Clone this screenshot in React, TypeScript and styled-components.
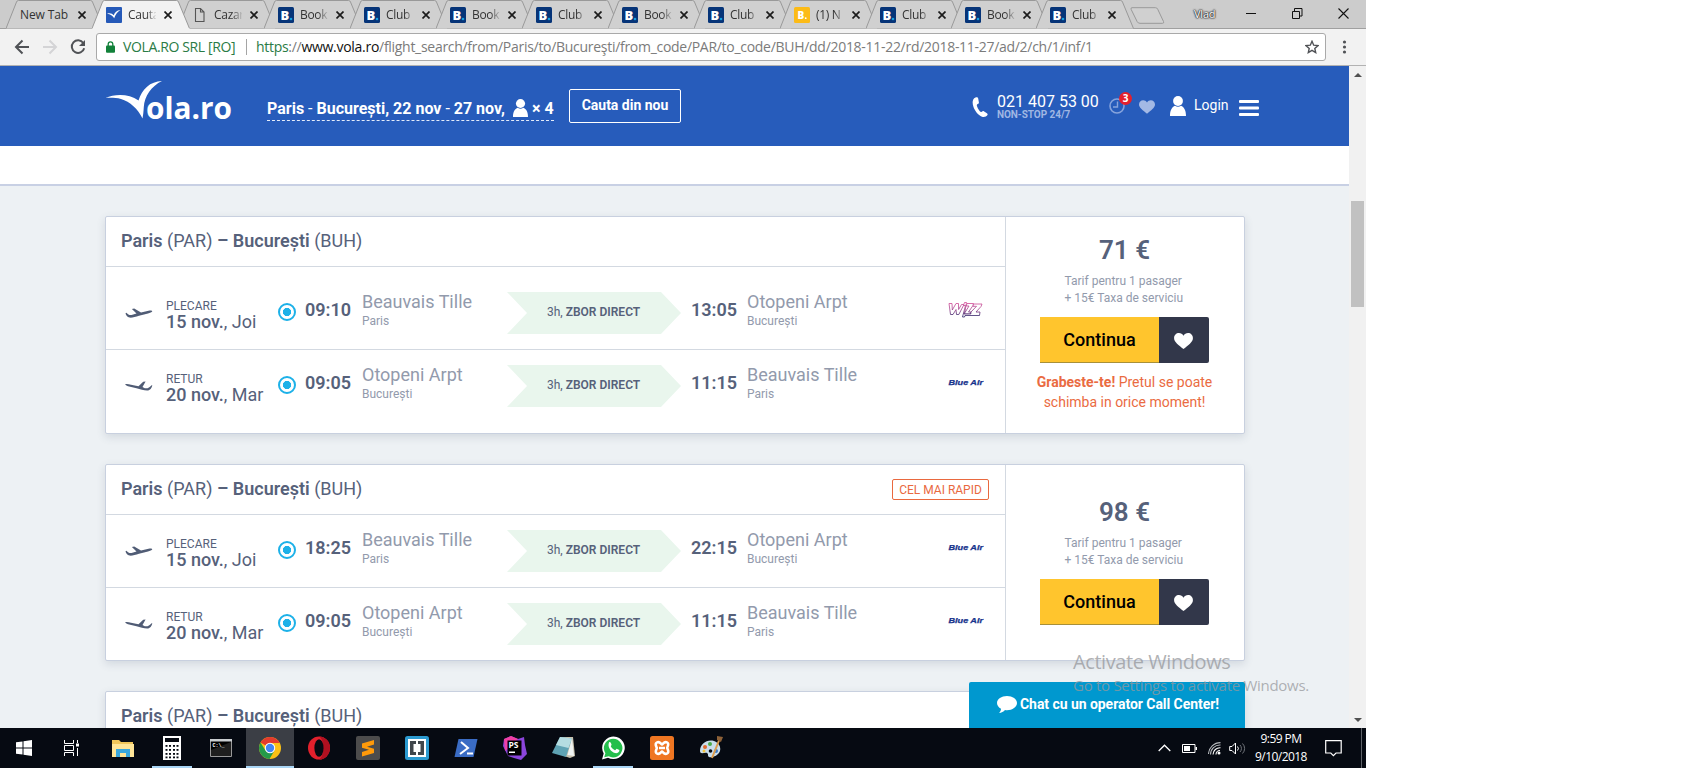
import React from "react";
import styled, { createGlobalStyle, css } from "styled-components";

const GlobalStyle = createGlobalStyle`
  * { box-sizing: border-box; }
  html, body { margin: 0; padding: 0; background: #fff; }
  body { font-family: Roboto, "Liberation Sans", sans-serif; }
  svg { display: block; flex: none; }
`;

const systemFont = css`
  font-family: "Open Sans", "Noto Sans", sans-serif;
`;

const Screen = styled.div`
  position: relative;
  width: 1366px;
  height: 768px;
  overflow: hidden;
  display: flex;
  flex-direction: column;
  background: #eef1f5;
`;

/* ---------- browser chrome ---------- */

const TabStrip = styled.div`
  ${systemFont}
  height: 29px;
  flex: none;
  display: flex;
  align-items: flex-start;
  padding-left: 6px;
  background: #cccccc;
  border-bottom: 1px solid #a0a0a0;
`;

const TabBox = styled.div<{ $active?: boolean; $narrow?: boolean }>`
  position: relative;
  z-index: ${(p) => (p.$active ? 2 : 1)};
  width: ${(p) => (p.$narrow ? 97 : 98)}px;
  height: 29px;
  flex: none;
  display: flex;
  align-items: center;
  padding: 0 0 0 14px;
  & + & { margin-left: -12px; }
`;

const TabShape = styled.svg`
  position: absolute;
  inset: 0;
  z-index: -1;
`;

const TabLabel = styled.span<{ $wide?: boolean }>`
  width: ${(p) => (p.$wide ? 50 : 28)}px;
  margin-left: ${(p) => (p.$wide ? 0 : 6)}px;
  overflow: hidden;
  white-space: nowrap;
  font-size: 12px;
  letter-spacing: ${(p) => (p.$wide ? -0.1 : -0.3)}px;
  line-height: 20px;
  color: #333;
  mask-image: ${(p) => (p.$wide ? "none" : "linear-gradient(90deg, #000 65%, transparent 105%)")};
`;

const CloseIcon = styled.svg`
  margin-left: 8px;
`;

const NewTab = styled.svg`
  margin: 7px 0 0 -5px;
`;

const ProfileName = styled.span`
  margin: 6px 0 0 29px;
  width: 24px;
  font-size: 11px;
  line-height: 16px;
  letter-spacing: -0.2px;
  color: #fff;
  text-shadow: 0 0 2px #333, 0 0 1px #333, 0 0 1px #333, 0 0 2px #333;
`;

const WindowControls = styled.div`
  display: flex;
  margin-left: auto;
  padding: 8px 17px 0 0;
  gap: 35px;
`;

const Toolbar = styled.div`
  ${systemFont}
  height: 37px;
  flex: none;
  display: flex;
  align-items: center;
  padding: 0 0 1px 14px;
  background: #f2f2f2;
  border-bottom: 1px solid #b2b2b2;
`;

const NavIcons = styled.div`
  display: flex;
  gap: 12px;
  width: 82px;
`;

const AddressBar = styled.div`
  width: 1230px;
  height: 28px;
  display: flex;
  align-items: center;
  padding: 0 6px 0 9px;
  border: 1px solid #a9a9a9;
  border-radius: 3px;
  background: #fff;
  font-size: 14px;
  color: #7b7b7b;
  white-space: nowrap;
`;

const SiteOwner = styled.span`
  flex: none;
  margin-left: 8px;
  width: 123px;
  color: #2a7b45;
  letter-spacing: -0.38px;
`;

const OwnerDivider = styled.i`
  flex: none;
  width: 1px;
  height: 16px;
  margin-right: 9px;
  background: #a5a5a5;
`;

const Url = styled.span`
  letter-spacing: -0.29px;
  b { font-weight: 400; color: #111; }
  em { font-style: normal; color: #2a7b45; }
`;

/* ---------- page ---------- */

const Viewport = styled.div`
  flex: 1;
  min-height: 0;
  display: flex;
`;

const Page = styled.main`
  position: relative;
  width: 1349px;
  height: 662px;
  overflow: hidden;
  background: #edf1f4;
`;

const Scrollbar = styled.div`
  width: 17px;
  display: flex;
  flex-direction: column;
  align-items: center;
  padding: 7px 0 6px;
  background: #f1f1f1;
`;

const Thumb = styled.div`
  width: 13px;
  height: 106px;
  margin-top: 124px;
  margin-bottom: auto;
  background: #c1c1c1;
`;

const Header = styled.header`
  height: 80px;
  display: flex;
  align-items: flex-start;
  padding-left: 105px;
  background: #275cbb;
  color: #fff;
`;

const SubHeader = styled.div`
  height: 40px;
  background: #fff;
  border-bottom: 2px solid #c8d0e4;
`;

const Logo = styled.svg`
  margin-top: 12px;
  overflow: visible;
`;

const Trip = styled.div`
  margin: 29px 0 0 27px;
  width: 287px;
  height: 26px;
  display: flex;
  align-items: center;
  padding-top: 1px;
  border-bottom: 1px dashed #e4ecfa;
  font-size: 16px;
  font-weight: 700;
  line-height: 24px;
  white-space: nowrap;
  i { font-style: normal; font-weight: 400; }
`;

const TripText = styled.span`
  width: 246px;
  padding-top: 2px;
`;

const Passengers = styled.span`
  margin-left: 4px;
  padding-top: 1px;
`;

const SearchAgain = styled.button`
  margin: 23px 0 0 15px;
  width: 112px;
  height: 34px;
  padding: 0 0 2px;
  border: 1px solid #fff;
  border-radius: 2px;
  background: transparent;
  color: #fff;
  font: 700 14px/20px Roboto, sans-serif;
`;

const HeaderTools = styled.div`
  display: flex;
  align-items: flex-start;
  margin: 26px 0 0 291px;
`;

const Phone = styled.div`
  width: 112px;
  margin-left: 9px;
  font-size: 16px;
  line-height: 19px;
  white-space: nowrap;
  small {
    display: block;
    margin-top: -2px;
    font-size: 10px;
    line-height: 12px;
    font-weight: 700;
    letter-spacing: -0.05px;
    color: #a0b7e3;
  }
`;

const History = styled.div`
  position: relative;
  width: 30px;
  padding-top: 6px;
`;

const Count = styled.span`
  position: absolute;
  left: 10px;
  top: 0;
  width: 13px;
  height: 13px;
  border-radius: 50%;
  background: #e3202e;
  font: 700 10px/13px "Open Sans", sans-serif;
  text-align: center;
`;

const Login = styled.span`
  width: 45px;
  margin-left: 8px;
  font-size: 14px;
  line-height: 27px;
`;

const Results = styled.section`
  width: 1140px;
  margin: 30px 0 0 105px;
  display: flex;
  flex-direction: column;
  gap: 30px;
`;

const Card = styled.article`
  display: flex;
  border: 1px solid #c8d0df;
  border-radius: 2px;
  background: #fff;
  color: #56617a;
  box-shadow: 0 3px 9px rgba(70, 84, 110, 0.16);
`;

const Flights = styled.div`
  width: 900px;
  border-right: 1px solid #d3d9e1;
`;

const CardHeader = styled.div`
  height: 50px;
  display: flex;
  align-items: center;
  justify-content: space-between;
  padding: 0 16px 1px 15px;
  border-bottom: 1px solid #d3d9e1;
  font-size: 18px;
`;

const Route = styled.span`
  padding-bottom: 2px;
  b { font-weight: 600; }
`;

const Badge = styled.span`
  width: 97px;
  height: 21px;
  border: 1px solid #e9693f;
  border-radius: 2px;
  color: #e9693f;
  font-size: 12px;
  line-height: 20px;
  text-align: center;
`;

const Legs = styled.div<{ $padded?: boolean }>`
  padding: ${(p) => (p.$padded ? "10px 0 11px" : "0")};
`;

const Leg = styled.div`
  height: 72px;
  display: flex;
  align-items: flex-start;
  padding-left: 19px;
  white-space: nowrap;
`;

const LegRule = styled.div`
  height: 1px;
  background: #d3d9e1;
`;

const LegIcon = styled.svg`
  margin-top: 30px;
`;

const Day = styled.div`
  width: 112px;
  margin-left: 13px;
  padding-top: 22px;
  font-size: 18px;
  line-height: 18px;
  b { font-weight: 500; }
  small { display: block; font-size: 12px; line-height: 14px; }
`;

const Radio = styled.span`
  width: 18px;
  height: 18px;
  margin-top: 26px;
  border: 2px solid #1db1e8;
  border-radius: 50%;
  background: radial-gradient(circle, #1db1e8 3.8px, #fff 4.4px);
`;

const Time = styled.span<{ $end?: boolean }>`
  width: ${(p) => (p.$end ? 56 : 57)}px;
  margin: 22px 0 0 ${(p) => (p.$end ? 10 : 9)}px;
  font-size: 18px;
  line-height: 22px;
  font-weight: 600;
`;

const Station = styled.div<{ $end?: boolean }>`
  width: ${(p) => (p.$end ? 201 : 145)}px;
  padding-top: 14px;
  font-size: 18px;
  line-height: 22px;
  color: #929aac;
  small { display: block; font-size: 12px; line-height: 16px; }
`;

const Duration = styled.div`
  width: 174px;
  height: 42px;
  margin-top: 15px;
  padding: 0 0 2px 40px;
  display: flex;
  align-items: center;
  gap: 3px;
  background: #e9f6ed;
  clip-path: polygon(0 0, 154px 0, 100% 50%, 154px 100%, 0 100%, 20px 50%);
  font-size: 12px;
  b { font-weight: 600; }
`;

const Airline = styled.svg`
  margin-top: 23px;
`;

const Offer = styled.div`
  flex: 1;
  display: flex;
  flex-direction: column;
  align-items: center;
  justify-content: center;
  padding: 0 2px 3px 0;
`;

const Price = styled.div`
  margin-left: 1px;
  font-size: 26px;
  line-height: 28px;
  font-weight: 600;
`;

const Terms = styled.div`
  width: 119px;
  margin-top: 9px;
  font-size: 12px;
  line-height: 17px;
  white-space: nowrap;
  color: #929aac;
`;

const Buy = styled.div`
  display: flex;
  margin-top: 10px;
  height: 46px;
`;

const Continue = styled.button`
  width: 119px;
  padding: 1px 0 0 1px;
  border: 0;
  border-bottom: 1px solid #a89039;
  background: #ffc52d;
  color: #000;
  font: 500 18px/22px Roboto, sans-serif;
`;

const Favourite = styled.button`
  width: 50px;
  padding: 3px 0 0;
  display: grid;
  place-items: center;
  border: 0;
  border-radius: 0 2px 2px 0;
  background: #32374a;
`;

const Warning = styled.p`
  width: 190px;
  margin: 9px 0 0 1px;
  text-align: center;
  font-size: 14px;
  line-height: 20px;
  color: #ea6b42;
`;

const Chat = styled.div`
  position: absolute;
  left: 969px;
  bottom: 0;
  width: 276px;
  height: 46px;
  display: flex;
  align-items: flex-start;
  padding: 13px 0 0 28px;
  border-radius: 2px 2px 0 0;
  background: #0098cf;
  color: #fff;
  font-size: 14px;
  font-weight: 700;
  line-height: 18px;
  white-space: nowrap;
  span { margin-left: 3px; letter-spacing: -0.05px; }
`;

const Watermark = styled.div`
  ${systemFont}
  position: absolute;
  left: 1073px;
  top: 649px;
  color: rgba(150, 152, 156, 0.75);
  white-space: nowrap;
  font-size: 15px;
  line-height: 20px;
  letter-spacing: -0.28px;
  strong { display: block; font-weight: 400; font-size: 20px; line-height: 26px; letter-spacing: -0.42px; }
`;

/* ---------- taskbar ---------- */

const Taskbar = styled.footer`
  ${systemFont}
  height: 40px;
  flex: none;
  display: flex;
  background: #060a12;
  color: #fff;
`;

const TaskButton = styled.div<{ $open?: boolean; $active?: boolean }>`
  position: relative;
  width: 48px;
  height: 40px;
  display: grid;
  place-items: center;
  background: ${(p) => (p.$active ? "#3b3e45" : "transparent")};
  &::after {
    content: "";
    display: ${(p) => (p.$open || p.$active ? "block" : "none")};
    position: absolute;
    bottom: 0;
    left: ${(p) => (p.$active ? 0 : 4)}px;
    right: ${(p) => (p.$active ? 0 : 4)}px;
    height: 2px;
    background: #a9d5f5;
  }
`;

const Apps = styled.div`
  display: flex;
  gap: 1px;
  margin-left: 3px;
`;

const Tray = styled.div`
  display: flex;
  align-items: center;
  margin-left: auto;
`;

const Clock = styled.div`
  width: 60px;
  margin: 0 14px 0 5px;
  text-align: center;
  font-size: 12px;
  line-height: 18px;
  letter-spacing: -0.55px;
  white-space: nowrap;
`;

const ShowDesktop = styled.i`
  width: 5px;
  height: 40px;
  margin-left: 19px;
  border-left: 1px solid #5e6268;
`;

/* ---------- icons ---------- */

const Booking = ({ yellow }: { yellow?: boolean }) => (
  <svg width="16" height="16" viewBox="0 0 16 16">
    <rect width="16" height="16" rx="1.5" fill={yellow ? "#fcbb17" : "#063478"} />
    <text x={yellow ? 3.5 : 2.5} y={yellow ? 12 : 13} fill="#fff" fontFamily="Open Sans" fontWeight="800" fontSize={yellow ? 10 : 13}>B</text>
    <circle cx={yellow ? 11.7 : 13} cy={yellow ? 11.2 : 12} r={yellow ? 0.9 : 1.3} fill={yellow ? "#fff" : "#159fe0"} />
  </svg>
);

const VolaIcon = () => (
  <svg width="16" height="16" viewBox="0 0 16 16">
    <rect width="16" height="16" rx="1" fill="#2559b8" />
    <path d="M1 6.800C4 5.800 6 6.500 7.800 8.300c.8-2.700 3-4.800 6.700-5.200C11.500 4.800 9.600 7.200 8.200 11.200 6.500 9 4.500 7.200 1 6.800Z" fill="#fff" />
  </svg>
);

const FileIcon = () => (
  <svg width="16" height="16" viewBox="0 0 16 16" fill="none" stroke="#555" strokeWidth="1.1">
    <path d="M3.500 1.500h5l3.500 3.500v9.500h-8.500z M8.500 1.500v3.500h3.500" />
  </svg>
);

const favicons: Record<string, React.ReactNode> = {
  vola: <VolaIcon />,
  file: <FileIcon />,
  booking: <Booking />,
  yellow: <Booking yellow />,
};

const tabs = [
  { label: "New Tab" },
  { label: "Cauta", icon: "vola", active: true },
  { label: "Cazar", icon: "file" },
  { label: "Book", icon: "booking" },
  { label: "Club", icon: "booking" },
  { label: "Book", icon: "booking" },
  { label: "Club", icon: "booking" },
  { label: "Book", icon: "booking" },
  { label: "Club", icon: "booking" },
  { label: "(1) N", icon: "yellow" },
  { label: "Club", icon: "booking", narrow: true },
  { label: "Book", icon: "booking", narrow: true },
  { label: "Club", icon: "booking" },
];

const Tab = ({ label, icon, active, narrow }: { label: string; icon?: string; active?: boolean; narrow?: boolean }) => (
  <TabBox $active={active} $narrow={narrow}>
    <TabShape width="98" height="29" viewBox="0 0 98 29">
      <path d="M0 28.500 L10.500 2Q11 .5 12.500 .5H84.500Q86 .5 86.500 2L97.500 28.500" fill={active ? "#f2f2f2" : "#d0d0d0"} stroke="#999" />
      {active && <path d="M.5 28.500H97.500" stroke="#f2f2f2" />}
    </TabShape>
    {icon && favicons[icon]}
    <TabLabel $wide={!icon}>{label}</TabLabel>
    <CloseIcon width="8" height="8" viewBox="0 0 8 8" stroke="#1c1c1c" strokeWidth="1.7">
      <path d="M.5 .5L7.500 7.500M7.500 .5L.5 7.500" />
    </CloseIcon>
  </TabBox>
);

const Person = ({ size, h }: { size: number; h: number }) => (
  <svg width={size} height={h} viewBox="0 0 16 20" preserveAspectRatio="none" fill="#fff">
    <circle cx="8" cy="5" r="4.900" />
    <path d="M0 20C0 14 2 11 5 9.700Q8 12 11 9.700C14 11 16 14 16 20Z" />
  </svg>
);

const Heart = ({ w, h, color }: { w: number; h: number; color: string }) => (
  <svg width={w} height={h} viewBox="0 0 20 17" fill={color}>
    <path d="M10 17C5 13 0 9.500 0 5.500 0 2.200 2.300 0 5.200 0 7.200 0 9 1.100 10 2.800 11 1.100 12.800 0 14.800 0 17.700 0 20 2.200 20 5.500 20 9.500 15 13 10 17Z" />
  </svg>
);

const Plane = ({ back }: { back?: boolean }) => (
  <LegIcon width="28" height="12" viewBox="0 0 28 12" fill="#505c75">
    {back ? (
      <path transform="translate(0 1)" d="M.2 3.300C1.500 2.700 4 3.200 6 3.700L13.500 5.300 18.200 .7 20.600 .5 17.500 6 19.800 7.200C22.500 7.900 24.500 6.300 26.600 4.200L27.300 4.300C26.800 7 25 9.800 22 9.600 19 9.400 15 8.300 11.500 7.300L3 5.200C1.400 4.800 .3 4.100 .2 3.300Z" />
    ) : (
      <path d="M27.300 4.300C26.800 5.300 25 6 23 6.500L14 8.700C10.500 9.700 7 11 4.500 10.600 2.300 10.200 1 8.300 .5 6.200L1.500 5.700C3 7.600 4.500 8.300 6.500 8L11.500 6.600 6.900 2 9.200 1.600 16 5.400 23.500 3.800C25.500 3.400 27 3.400 27.300 4.300Z" />
    )}
  </LegIcon>
);

const Carrier = ({ name }: { name: "wizz" | "blue" }) =>
  name === "wizz" ? (
    <Airline width="36" height="18" viewBox="0 0 36 18">
      <defs>
        <linearGradient id="wizz" x1="0" y1="0" x2="0" y2="18" gradientUnits="userSpaceOnUse">
          <stop offset="0.1" stopColor="#dc4b98" />
          <stop offset="0.5" stopColor="#a5438c" />
          <stop offset="0.9" stopColor="#302569" />
        </linearGradient>
      </defs>
      <g fill="#fff" stroke="url(#wizz)" strokeWidth="0.8" strokeLinejoin="miter">
        <path d="M1 3.500H4L4.300 10 8 3.500H10.500L10.600 9.500 13.500 4.500H16L10.800 14.500H8.500L8 9.500 5 14.500H2.500Z" />
        <path d="M19 3.500H25.500L25 5.500 20.500 12H23L22.300 14H16.500L17 12.500 21 6H18.200Z" />
        <path d="M25.500 4H34L33 6.500 28 12H32L31.500 15.500H17L16.500 17H14.500L17.500 5.500H15.500L16.500 2.500H18.500L17 11 15.800 14H22.800L23 12 28.500 6.300H25Z" />
      </g>
    </Airline>
  ) : (
    <Airline width="36" height="18" viewBox="0 0 36 18">
      <text x="0.500" y="11.800" textLength="34.500" lengthAdjust="spacingAndGlyphs" fill="#17338c" stroke="#17338c" strokeWidth="0.25" fontFamily="Liberation Sans" fontWeight="700" fontStyle="italic" fontSize="7.200">Blue Air</text>
    </Airline>
  );

/* ---------- results ---------- */

type LegData = { kind: "PLECARE" | "RETUR"; dep: string; arr: string; carrier: "wizz" | "blue" };

const stations = {
  PLECARE: [["Beauvais Tille", "Paris"], ["Otopeni Arpt", "București"]],
  RETUR: [["Otopeni Arpt", "București"], ["Beauvais Tille", "Paris"]],
};

const LegRow = ({ kind, dep, arr, carrier }: LegData) => {
  const [from, to] = stations[kind];
  return (
    <Leg>
      <Plane back={kind === "RETUR"} />
      <Day>
        <small>{kind}</small>
        <b>{kind === "PLECARE" ? "15 nov." : "20 nov."}</b>, {kind === "PLECARE" ? "Joi" : "Mar"}
      </Day>
      <Radio />
      <Time>{dep}</Time>
      <Station>{from[0]}<small>{from[1]}</small></Station>
      <Duration>3h, <b>ZBOR DIRECT</b></Duration>
      <Time $end>{arr}</Time>
      <Station $end>{to[0]}<small>{to[1]}</small></Station>
      <Carrier name={carrier} />
    </Leg>
  );
};

const RouteTitle = () => (
  <Route><b>Paris</b> (PAR) <b>– București</b> (BUH)</Route>
);

const Result = ({ price, legs, badge, warn }: { price: string; legs: LegData[]; badge?: string; warn?: boolean }) => (
  <Card>
    <Flights>
      <CardHeader>
        <RouteTitle />
        {badge && <Badge>{badge}</Badge>}
      </CardHeader>
      <Legs $padded={warn}>
        {legs.map((leg, i) => (
          <React.Fragment key={leg.kind}>
            {i > 0 && <LegRule />}
            <LegRow {...leg} />
          </React.Fragment>
        ))}
      </Legs>
    </Flights>
    <Offer>
      <Price>{price}</Price>
      <Terms>Tarif pentru 1 pasager<br />+ 15€ Taxa de serviciu</Terms>
      <Buy>
        <Continue>Continua</Continue>
        <Favourite><Heart w={19} h={16} color="#fff" /></Favourite>
      </Buy>
      {warn && <Warning><b>Grabeste-te!</b> Pretul se poate schimba in orice moment!</Warning>}
    </Offer>
  </Card>
);

/* ---------- taskbar icons ---------- */

const appIcons: { name: string; open?: boolean; active?: boolean; art: React.ReactNode }[] = [
  { name: "files", art: <><path d="M1 4h7l2 2h12v15H1z" fill="#f0c65a" /><path d="M1 8h22v13H1z" fill="#ffe597" /><path d="M5 21v-8h14v8h-4v-4H9v4z" fill="#3aa7dc" /></> },
  {
    name: "calculator", open: true, art: <>
      <path d="M3 0h18v24H3z" fill="#fff" /><path d="M5 2h14v4H5z" fill="#060a12" />
      {[9, 13, 17, 20.500].map((y) => [5.500, 9, 13, 16.500].map((x) => <rect key={`${x}-${y}`} x={x} y={y} width="2" height="1.800" fill="#060a12" />))}
    </>,
  },
  { name: "terminal", art: <><path d="M1.500 3.500h21v17h-21z" fill="#000" stroke="#999" /><path d="M1 3h22v2.500H1z" fill="#c9cdd0" /><path d="M2 14L22 6v14H2z" fill="#333" opacity=".6" /><text x="3.500" y="11" fontSize="5" fill="#fff" fontFamily="Liberation Mono" fontWeight="700">C:\_</text></> },
  { name: "chrome", active: true, art: <><circle cx="12" cy="12" r="11" fill="#fbc116" /><path d="M12 12L2.500 6.500A11 11 0 0 1 21.500 6.500L21.500 7H12z" fill="#e33b2e" /><path d="M2.500 6.500A11 11 0 0 0 11.500 23L16.500 14.500 12 12 7.500 14.500z" fill="#249a49" /><circle cx="12" cy="12" r="5.200" fill="#fff" /><circle cx="12" cy="12" r="4.200" fill="#4285f4" /></> },
  { name: "opera", art: <><ellipse cx="12" cy="12" rx="11" ry="11.500" fill="#e2202c" /><path d="M12 .5a11 11.500 0 0 1 0 23c6-3 6-20 0-23" fill="#b01020" /><ellipse cx="12" cy="12" rx="4.600" ry="8.800" fill="#060a12" /></> },
  { name: "sublime", art: <><rect width="24" height="24" rx="2" fill="#4c4c4c" /><path d="M18 4v4.500l-7 2.200 7 2V17L6 20.500V16l7-2.200-7-2V7.500z" fill="#ff9a0a" /></> },
  { name: "brackets", art: <><rect width="24" height="24" rx="2.500" fill="#2b9ad0" /><path d="M3 3h18v18H3z" fill="#fff" /><path d="M5 5h6v3H8.500v8H11v3H5zM19 5h-6v3h2.500v8H13v3h6z" fill="#3f464b" /></> },
  { name: "powershell", art: <><path d="M4.500 3H23.500L19.500 21H.5z" fill="#3a6cc4" /><path d="M7 6l7 6-8 6M13 17.500h6" fill="none" stroke="#fff" strokeWidth="2" /></> },
  { name: "phpstorm", art: <><path d="M1 3l7-3 7 3 6-2 1 8 2 9-6 6-7-2-6-2L0 10z" fill="#8b45dc" /><path d="M1 3l7-3 7 3-13 12z" fill="#f03fa4" /><path d="M4.500 4.500h14v15h-14z" fill="#000" /><text x="5.500" y="12" fontSize="8.500" fill="#fff" fontFamily="Open Sans" fontWeight="700">PS</text><path d="M6 15.500h6v1.500H6z" fill="#fff" /></> },
  { name: "notepad", art: <><path d="M8 1h13l2 19-5 2-6-2z" fill="#c9c2ae" /><path d="M8 1l12 1.500-6 18.500L0 17z" fill="#5fa3b4" /><path d="M8 1l12 1.500-3.500 9.500L4 9z" fill="#b5dde2" /><path d="M20 2.500l2 17.500-6.500-1z" fill="#eef3f2" /></> },
  { name: "whatsapp", open: true, art: <><path d="M1 23.500l1.700-6A11.300 11.300 0 1 1 7 21.700z" fill="#fff" /><path d="M3.200 21.300l1.200-4A9.300 9.300 0 1 1 7.700 20.300z" fill="#24bf4c" /><path d="M8 6.500c1-1 2 0 2.500 2 .3 1-1 1.300-.6 2 1 2 2.500 3 4 3.700.8.200 1.400-1.700 2.200-1.300l2.300 1.200c.3 2.200-2.400 3.600-4.400 3C10 16 6.200 11 8 6.500z" fill="#fff" /></> },
  { name: "xampp", art: <><rect width="24" height="24" rx="2.500" fill="#ef7622" /><path d="M6.800 6.500C10 4.800 11 8.500 12 8.500s2-3.700 5.200-2c2.600 1.500-.2 4.300 0 5.500.2 1.200 2.600 4 0 5.500C14 19.200 13 15.500 12 15.500s-2 3.700-5.200 2c-2.600-1.500.2-4.300 0-5.500C6.600 10.800 4.200 8 6.800 6.500z" fill="none" stroke="#fff" strokeWidth="2.500" /><path d="M9 12h6" stroke="#fff" strokeWidth="2.500" /></> },
  { name: "paint", art: <><path d="M1 15C1 8 8 3 15 5c5 2 7 6 6 10-2 5-8 7-11 6-2-1 0-3-2-4s-7 2-7-2z" fill="#c9ddec" /><circle cx="6" cy="11" r="2" fill="#e0692e" /><circle cx="11" cy="8" r="2" fill="#4cab4c" /><circle cx="5" cy="15" r="1.500" fill="#f0c23d" /><circle cx="17" cy="15" r="2" fill="#3879ca" /><circle cx="11.500" cy="15" r="1.800" fill="#060a12" /><path d="M21 2L13 22" stroke="#dc9c4d" strokeWidth="2" /><path d="M18 0l6 1-2 5-4-2z" fill="#8d6138" /></> },
];

export default function App() {
  return (
    <>
      <GlobalStyle />
      <Screen>
        <TabStrip>
          {tabs.map((tab, i) => <Tab key={i} {...tab} />)}
          <NewTab width="36" height="17" viewBox="0 0 36 17">
            <path d="M3 .7H26.500Q28 .7 28.700 2.200L34.500 14.500Q35.300 16.300 33.500 16.300H11Q9 16.300 8.200 14.700L2.200 2.500Q1.500 .7 3 .7Z" fill="#d0d0d0" stroke="#999" />
          </NewTab>
          <ProfileName>Vlad</ProfileName>
          <WindowControls>
            <svg width="11" height="11" stroke="#111"><path d="M0 5.500H10" /></svg>
            <svg width="11" height="11" fill="none" stroke="#111"><path d="M.5 3.500h7v7h-7zM2.500 3.500v-3h7.500v7.500h-2.500" /></svg>
            <svg width="11" height="11" stroke="#111" strokeWidth="1.100"><path d="M.5 .5l10 10M10.500 .5l-10 10" /></svg>
          </WindowControls>
        </TabStrip>
        <Toolbar>
          <NavIcons>
            <svg width="16" height="16" fill="none" stroke="#505256" strokeWidth="2"><path d="M15 8H2M8.500 1.500L2 8l6.500 6.500" /></svg>
            <svg width="16" height="16" fill="none" stroke="#d4d4d6" strokeWidth="2"><path d="M1 8H14M7.500 1.500L14 8l-6.500 6.500" /></svg>
            <svg width="16" height="16" fill="none" stroke="#505256" strokeWidth="2"><path d="M13.300 4A6.300 6.300 0 1 0 14.200 9.200" /><path d="M15 1v6H9z" fill="#505256" stroke="none" /></svg>
          </NavIcons>
          <AddressBar>
            <svg width="9" height="12" viewBox="0 0 9 12"><rect y="4.500" width="9" height="7.200" rx="1" fill="#12813a" /><path d="M2.200 5V3.200a2.300 2.300 0 0 1 4.600 0V5" fill="none" stroke="#12813a" strokeWidth="1.300" /></svg>
            <SiteOwner>VOLA.RO SRL [RO]</SiteOwner>
            <OwnerDivider />
            <Url><em>https</em>://<b>www.vola.ro</b>/flight_search/from/Paris/to/Bucureşti/from_code/PAR/to_code/BUH/dd/2018-11-22/rd/2018-11-27/ad/2/ch/1/inf/1</Url>
            <svg style={{ marginLeft: "auto" }} width="14" height="14" viewBox="0 0 14 14" fill="none" stroke="#505256" strokeWidth="1.400"><path d="M7 1.300L8.700 5.200 13 5.600 9.800 8.400 10.700 12.600 7 10.400 3.300 12.600 4.200 8.400 1 5.600 5.300 5.200Z" /></svg>
          </AddressBar>
          <svg style={{ marginLeft: 16 }} width="5" height="14" fill="#505256"><circle cx="2.500" cy="2" r="1.600" /><circle cx="2.500" cy="7" r="1.600" /><circle cx="2.500" cy="12" r="1.600" /></svg>
        </Toolbar>
        <Viewport>
          <Page>
            <Header>
              <Logo width="135" height="50" viewBox="0 0 135 50" fill="#fff">
                <path d="M.5 20C10 15.500 24 15.500 33.500 22.500 37 11 45 3.500 57 3 46.500 8 39.500 18 38.800 29 38.500 33.500 38.200 37 37.500 40.500 33 31 25 23.500 16 21 11 19.700 5 19.700 .5 20Z" />
                <text x="41" y="40.500" textLength="86" lengthAdjust="spacingAndGlyphs" fontFamily="Open Sans" fontWeight="700" fontSize="29.500">ola.ro</text>
              </Logo>
              <Trip>
                <TripText>Paris <i>-</i> București, 22 nov <i>-</i> 27 nov,</TripText>
                <Person size={15} h={18} />
                <Passengers>× 4</Passengers>
              </Trip>
              <SearchAgain>Cauta din nou</SearchAgain>
              <HeaderTools>
                <svg style={{ marginTop: 5 }} width="16" height="20" viewBox="0 0 16 20"><path d="M3.500 .5C0 2 .2 6.500 1.500 10c1.300 3.700 4.500 8.200 8.500 9.700 2 .7 4.500 0 5.500-1.700.3-.8 0-1.200-.6-1.700L11.800 14.200c-.7-.4-1.200-.2-2 .5-.7.500-1.400.2-2-.5C6.300 12.500 5.300 10.500 4.900 8.800c-.2-.8 0-1.400.8-1.700 1-.4 1.300-.8 1.200-1.600L6.200 1.500C6 .6 5 0 3.500 .5Z" fill="#fff" /></svg>
                <Phone>021 407 53 00<small>NON-STOP 24/7</small></Phone>
                <History>
                  <svg width="17" height="17" fill="none" stroke="#86a3dc" strokeWidth="1.600"><circle cx="8" cy="8" r="7" /><path d="M8.500 3.500V9H4" strokeWidth="1.400" /></svg>
                  <Count>3</Count>
                </History>
                <div style={{ paddingTop: 8 }}><Heart w={16} h={14} color="#a3b9e5" /></div>
                <div style={{ padding: "4px 0 0 15px" }}><Person size={16} h={20} /></div>
                <Login>Login</Login>
                <svg style={{ marginTop: 8 }} width="20" height="17" fill="#fff"><rect width="20" height="3" rx="1" /><rect y="6.500" width="20" height="3" rx="1" /><rect y="13" width="20" height="3" rx="1" /></svg>
              </HeaderTools>
            </Header>
            <SubHeader />
            <Results>
              <Result price="71 €" warn legs={[
                { kind: "PLECARE", dep: "09:10", arr: "13:05", carrier: "wizz" },
                { kind: "RETUR", dep: "09:05", arr: "11:15", carrier: "blue" },
              ]} />
              <Result price="98 €" badge="CEL MAI RAPID" legs={[
                { kind: "PLECARE", dep: "18:25", arr: "22:15", carrier: "blue" },
                { kind: "RETUR", dep: "09:05", arr: "11:15", carrier: "blue" },
              ]} />
              <Card>
                <Flights>
                  <CardHeader><RouteTitle /></CardHeader>
                </Flights>
              </Card>
            </Results>
            <Chat>
              <svg width="20" height="18" viewBox="0 0 20 18"><path d="M10 1C4.500 1 0 4 0 8c0 2.500 1.700 4.500 4 5.700C4 15.500 3 17 2 18c2.500-.3 4.500-1.300 6-3 .7.100 1.300.2 2 .2 5.500 0 10-3.200 10-7.200S15.500 1 10 1Z" fill="#fff" /></svg>
              <span>Chat cu un operator Call Center!</span>
            </Chat>
          </Page>
          <Scrollbar>
            <svg width="8" height="4" fill="#505050"><path d="M0 4L4 0l4 4z" /></svg>
            <Thumb />
            <svg width="8" height="4" fill="#505050"><path d="M0 0h8L4 4z" /></svg>
          </Scrollbar>
        </Viewport>
        <Watermark><strong>Activate Windows</strong>Go to Settings to activate Windows.</Watermark>
        <Taskbar>
          <TaskButton>
            <svg width="16" height="16" fill="#fff"><path d="M0 2.300L6.500 1.400V7.500H0zM7.500 1.200L16 0V7.500H7.500zM0 8.500H6.500V14.600L0 13.700zM7.500 8.500H16V16L7.500 14.800z" /></svg>
          </TaskButton>
          <TaskButton>
            <svg width="18" height="16" fill="none" stroke="#fff"><path d="M1.500 0v3.500h9V0M1.500 16v-3.500h9V16M1.500 5.500h9v5h-9zM14.500 0v3M14.500 8v8" /><path d="M13 3.500h3v3h-3z" fill="#fff" stroke="none" /></svg>
          </TaskButton>
          <Apps>
            {appIcons.map((app) => (
              <TaskButton key={app.name} $open={app.open} $active={app.active}>
                <svg width="24" height="24" viewBox="0 0 24 24">{app.art}</svg>
              </TaskButton>
            ))}
          </Apps>
          <Tray>
            <svg width="13" height="8" fill="none" stroke="#fff" strokeWidth="1.300"><path d="M.7 7L6.500 1.200 12.300 7" /></svg>
            <svg style={{ marginLeft: 11 }} width="15" height="9" fill="none" stroke="#fff"><path d="M.5 .5h12.500v8H.5z" /><path d="M2 2h6v5H2zM13.500 3h1.500v3h-1.500z" fill="#fff" stroke="none" /></svg>
            <svg style={{ marginLeft: 11 }} width="14" height="13" fill="none" stroke="#fff" strokeWidth="1.100"><path d="M8 12.500a4 4 0 0 1 4-4M5 12.500a7 7 0 0 1 7.500-6.800" /><path d="M2.500 12.500A9.500 9.500 0 0 1 12.500 3M.5 12A12 12 0 0 1 12.500 .6" stroke="#b8bbbf" /><circle cx="11" cy="11" r="1.500" fill="#fff" stroke="none" /></svg>
            <svg style={{ marginLeft: 7 }} width="17" height="13" fill="none" stroke="#fff"><path d="M.7 4.500h2.300L6.500 1v11L3 8.500H.7z" /><path d="M8.500 4.500a3 3 0 0 1 0 4" /><path d="M11 3a5 5 0 0 1 0 7M13.500 1.500a7 7 0 0 1 0 10" stroke="#71757b" /></svg>
            <Clock>9:59 PM<br />9/10/2018</Clock>
            <svg width="17" height="17" fill="none" stroke="#fff" strokeWidth="1.200"><path d="M.7 .7h15.500v12.300H11L8.400 15.700 5.800 13H.7z" /></svg>
            <ShowDesktop />
          </Tray>
        </Taskbar>
      </Screen>
    </>
  );
}
